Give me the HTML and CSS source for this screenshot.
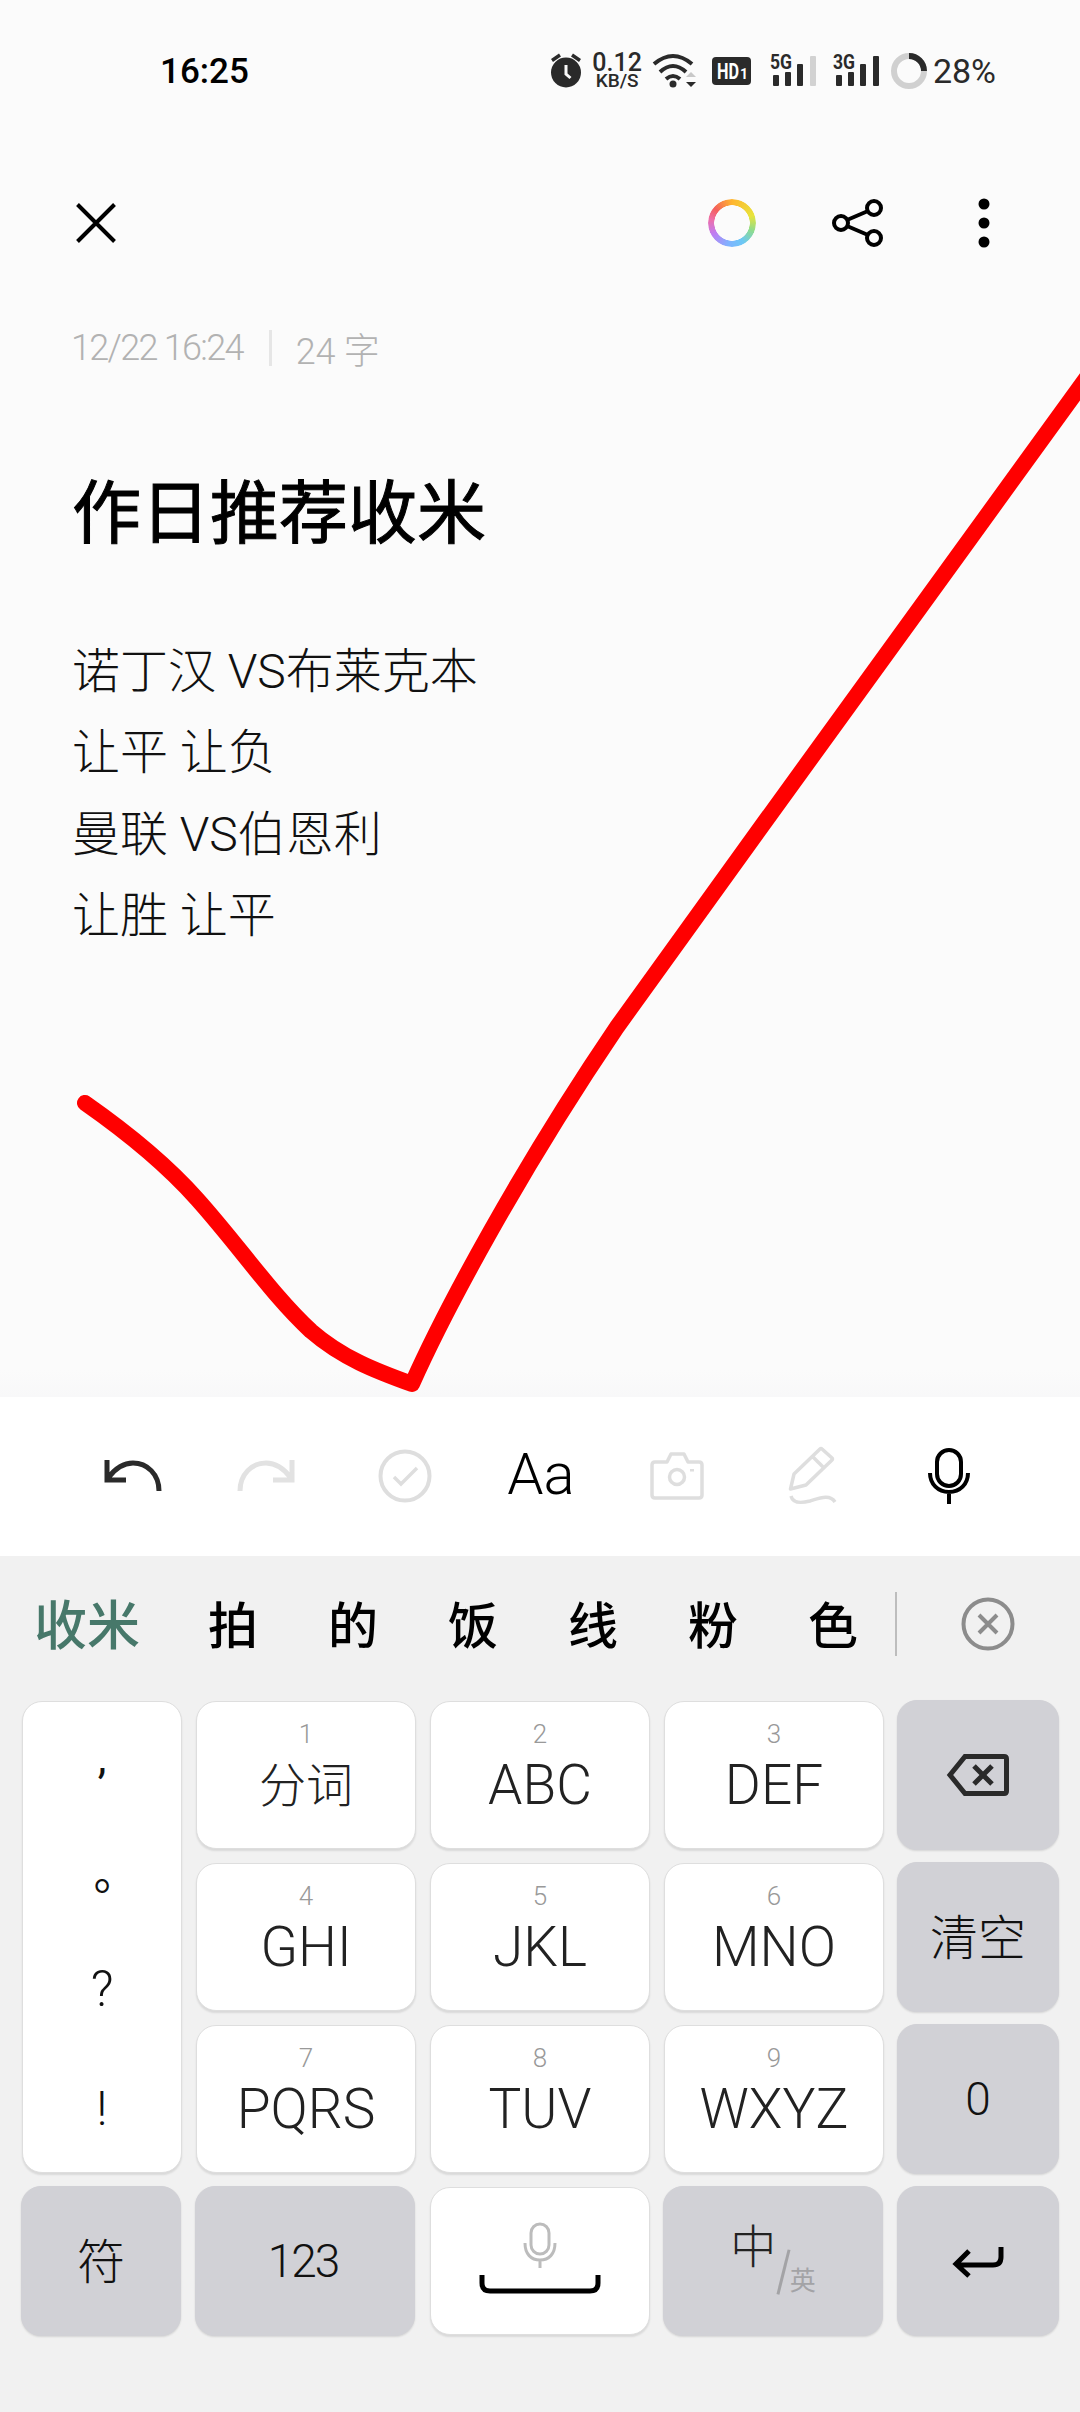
FILE: index.html
```html
<!DOCTYPE html>
<html lang="zh">
<head>
    <meta charset="UTF-8">
    <meta name="viewport" content="width=device-width, initial-scale=1.0">
    <title>便签</title>
    <link rel="stylesheet" href="styles.css">
</head>
<body>
<div class="page">
    <div class="note">
        <div class="status">
            <span class="time">16:25</span>
            <div class="status-icons">
                <svg class="ic-alarm" width="32" height="34" viewBox="0 0 32 34"><circle cx="16" cy="18.500" r="15" fill="#2a2a2a"/><path d="M2 6.500 10 1M22 1l8 5.500" stroke="#2a2a2a" stroke-width="3.500" fill="none"/><path d="M16 11v9l4.500 4" stroke="#fbfbfb" stroke-width="3" fill="none"/></svg>
                <div class="speed"><span>0.12</span><span class="speed-unit">KB/S</span></div>
                <svg class="ic-wifi" width="45" height="34" viewBox="0 0 45 34"><g fill="none" stroke="#2a2a2a" stroke-width="4"><path d="M1 10Q20-6 39 10"/><path d="M7 18Q20 6 33 18"/><path d="M13 25Q20 19 27 25"/></g><circle cx="20" cy="30" r="3.500" fill="#2a2a2a"/><path d="M33 23l5-5 5 5z" fill="#c8c8c8"/><path d="M33 28l5 5 5-5z" fill="#2a2a2a"/></svg>
                <svg class="ic-hd" width="39" height="28" viewBox="0 0 39 28"><rect width="39" height="28" rx="4" fill="#2a2a2a"/><text x="5" y="22" class="hd-text" textLength="22" lengthAdjust="spacingAndGlyphs">HD</text><text x="28" y="22" class="hd-sub">1</text></svg>
                <svg class="ic-signal" width="48" height="34" viewBox="0 0 48 34"><text x="0" y="15" class="net-text" textLength="22" lengthAdjust="spacingAndGlyphs">5G</text><rect x="3" y="21" width="6" height="11" rx="1" fill="#2a2a2a"/><rect x="15" y="18" width="6" height="14" rx="1" fill="#2a2a2a"/><rect x="27" y="10" width="6" height="22" rx="1" fill="#2a2a2a"/><rect x="40" y="2" width="6" height="30" rx="1" fill="#d2d2d2"/></svg>
                <svg class="ic-signal2" width="48" height="34" viewBox="0 0 48 34"><text x="0" y="15" class="net-text" textLength="22" lengthAdjust="spacingAndGlyphs">3G</text><rect x="3" y="21" width="6" height="11" rx="1" fill="#2a2a2a"/><rect x="15" y="18" width="6" height="14" rx="1" fill="#2a2a2a"/><rect x="27" y="10" width="6" height="22" rx="1" fill="#2a2a2a"/><rect x="40" y="2" width="6" height="30" rx="1" fill="#2a2a2a"/></svg>
                <svg class="ic-battery" width="36" height="36" viewBox="0 0 36 36"><circle cx="18" cy="18" r="15" fill="none" stroke="#d0d0d0" stroke-width="6"/><path d="M18 3A15 15 0 0 1 33 18" fill="none" stroke="#2a2a2a" stroke-width="6"/></svg>
                <span class="battery-text">28%</span>
            </div>
        </div>

        <div class="header">
            <svg width="40" height="40" viewBox="0 0 40 40"><path d="M1.500 1.500l37 37M38.500 1.500l-37 37" stroke="#000" stroke-width="4" fill="none"/></svg>
            <div class="header-right">
                <div class="color-ring"></div>
                <svg class="share" width="52" height="48" viewBox="0 0 52 48"><g fill="none" stroke="#000" stroke-width="4"><circle cx="9" cy="24" r="7"/><circle cx="42" cy="9" r="7"/><circle cx="42" cy="39" r="7"/><path d="M15 21 36 12M15 27 36 36"/></g></svg>
                <svg class="more" width="12" height="50" viewBox="0 0 12 50"><circle cx="6" cy="6" r="5.500"/><circle cx="6" cy="25" r="5.500"/><circle cx="6" cy="44" r="5.500"/></svg>
            </div>
        </div>

        <div class="meta">
            <span class="meta-date">12/22 16:24</span>
            <span class="meta-sep"></span>
            <span class="meta-count">24 字</span>
        </div>

        <h1 class="title">作日推荐收米</h1>
        <div class="content">
            <div>诺丁汉 VS布莱克本</div>
            <div>让平 让负</div>
            <div>曼联 VS伯恩利</div>
            <div>让胜 让平</div>
        </div>
    </div>

    <div class="toolbar">
        <div class="tool"><svg width="58" height="32" viewBox="0 0 58 32"><path d="M55 31C55 14 43 3 29 3 18 3 10 10 4 18M3 0V20H22" fill="none" stroke="#2a2a2a" stroke-width="5"/></svg></div>
        <div class="tool tool-redo"><svg width="58" height="32" viewBox="0 0 58 32"><path d="M3 31C3 14 15 3 29 3 40 3 48 10 54 18M55 0V20H36" fill="none" stroke="#e2e2e2" stroke-width="5"/></svg></div>
        <div class="tool"><svg width="54" height="54" viewBox="0 0 54 54"><circle cx="27" cy="27" r="24.500" fill="none" stroke="#dedede" stroke-width="4"/><path d="M16 28l7 7 16-16" fill="none" stroke="#dedede" stroke-width="3.500"/></svg></div>
        <div class="tool tool-text">Aa</div>
        <div class="tool"><svg width="54" height="48" viewBox="0 0 54 48"><path d="M5 10H17L21 2H34L38 10H49Q52 10 52 13V43Q52 46 49 46H5Q2 46 2 43V13Q2 10 5 10Z" fill="none" stroke="#dedede" stroke-width="3.500" stroke-linejoin="round"/><circle cx="27" cy="25" r="7.500" fill="none" stroke="#dedede" stroke-width="3.500"/><rect x="40" y="17" width="4" height="2.500" fill="#dedede"/></svg></div>
        <div class="tool"><svg width="48" height="60" viewBox="0 0 48 60"><path d="M1.500 43 5 28 31 3Q32 2 33 3L43 12Q44 13 43 14L17 39ZM23 10 36 23" fill="none" stroke="#dedede" stroke-width="3.500" stroke-linejoin="round"/><path d="M2 50C4 58 13 57 21 55 31 52 41 48 46 56" fill="none" stroke="#dedede" stroke-width="3.500"/></svg></div>
        <div class="tool"><svg width="42" height="56" viewBox="0 0 42 56"><rect x="9" y="2" width="24" height="36" rx="12" fill="none" stroke="#000" stroke-width="4"/><path d="M2 25C2 36 10 44 21 44 32 44 40 36 40 25M21 44V56" fill="none" stroke="#000" stroke-width="4"/></svg></div>
    </div>

    <div class="keyboard">
        <div class="candidates">
            <span class="cand cand-first">收米</span>
            <span class="cand">拍</span>
            <span class="cand">的</span>
            <span class="cand">饭</span>
            <span class="cand">线</span>
            <span class="cand">粉</span>
            <span class="cand">色</span>
            <span class="cand-sep"></span>
            <svg class="cand-clear" width="54" height="54" viewBox="0 0 54 54"><circle cx="27" cy="27" r="24.500" fill="none" stroke="#8c8c8c" stroke-width="4"/><path d="M18 18l18 18M36 18 18 36" stroke="#8c8c8c" stroke-width="4" fill="none"/></svg>
        </div>

        <div class="keys">
            <div class="key punct">
                <span class="p-comma">,</span>
                <span class="p-stop">。</span>
                <span class="p-q">?</span>
                <span class="p-ex">!</span>
            </div>
            <div class="key"><span class="num">1</span><span class="main main-cjk">分词</span></div>
            <div class="key"><span class="num">2</span><span class="main">ABC</span></div>
            <div class="key"><span class="num">3</span><span class="main">DEF</span></div>
            <div class="key gray"><svg width="62" height="42" viewBox="0 0 62 42"><path d="M18 2.500H57Q59.500 2.500 59.500 5V37Q59.500 39.500 57 39.500H18L3 21Z" fill="none" stroke="#2a2a2a" stroke-width="5"/><path d="M27 12 45 30M45 12 27 30" stroke="#2a2a2a" stroke-width="5" fill="none"/></svg></div>

            <div class="key"><span class="num">4</span><span class="main">GHI</span></div>
            <div class="key"><span class="num">5</span><span class="main">JKL</span></div>
            <div class="key"><span class="num">6</span><span class="main">MNO</span></div>
            <div class="key gray label label-cjk">清空</div>

            <div class="key"><span class="num">7</span><span class="main">PQRS</span></div>
            <div class="key"><span class="num">8</span><span class="main">TUV</span></div>
            <div class="key"><span class="num">9</span><span class="main">WXYZ</span></div>
            <div class="key gray label">0</div>

            <div class="key gray label label-cjk">符</div>
            <div class="key gray label label-num">123</div>
            <div class="key space"><svg width="122" height="72" viewBox="0 0 122 72"><rect x="52" y="2" width="18" height="30" rx="9" fill="none" stroke="#bcbcbc" stroke-width="3"/><path d="M46 21C46 32 52 38 61 38 70 38 76 32 76 21M61 38V46" fill="none" stroke="#bcbcbc" stroke-width="3"/><path d="M3 53V61Q3 69 11 69H111Q119 69 119 61V53" fill="none" stroke="#000" stroke-width="5"/></svg></div>
            <div class="key gray lang"><span class="lang-zh">中</span><span class="lang-slash"></span><span class="lang-en">英</span></div>
            <div class="key gray"><svg width="54" height="32" viewBox="0 0 54 32"><path d="M50 2V12Q50 20 42 20H6M18 6 5 19 18 31" fill="none" stroke="#000" stroke-width="5"/></svg></div>
        </div>
    </div>

    <svg class="ink" width="1080" height="2412" viewBox="0 0 1080 2412">
        <path d="M85 1103C125 1131 165 1163 197 1199 240 1247 272 1295 311 1331 342 1358 376 1371 412 1384 445 1310 520 1170 617 1027L764 823 964 547 1090 373" fill="none" stroke="#ff0000" stroke-width="16" stroke-linecap="round" stroke-linejoin="round"/>
    </svg>
</div>
</body>
</html>
```

FILE: styles.css
```css
* {
    box-sizing: border-box;
}

body {
    margin: 0;
    font-family: Roboto, "Noto Sans CJK SC", sans-serif;
    color: #000;
}

svg {
    overflow: visible;
}

.page {
    position: relative;
    width: 1080px;
    height: 2412px;
    overflow: hidden;
    display: flex;
    flex-direction: column;
    background: #fff;
}

.ink {
    position: absolute;
    left: 0;
    top: 0;
    pointer-events: none;
}

/* note area */
.note {
    height: 1397px;
    background: linear-gradient(#fbfbfb 1370px, #f8f8f9);
}

.status {
    height: 141px;
    display: flex;
    align-items: center;
    justify-content: space-between;
    padding: 0 84px 0 160px;
}

.time {
    margin-top: 2px;
    font-size: 35px;
    font-weight: 500;
}

.status-icons {
    display: flex;
    align-items: center;
    color: #2a2a2a;
}

.speed {
    display: flex;
    flex-direction: column;
    align-items: center;
    margin-left: 10px;
    font-size: 25px;
    font-weight: 500;
    line-height: 20px;
}

.speed-unit {
    font-size: 19px;
    line-height: 16px;
}

.ic-wifi {
    margin-left: 11px;
}

.ic-hd {
    margin-left: 14px;
}

.hd-text {
    font-size: 22px;
    font-weight: 700;
    fill: #fff;
}

.hd-sub {
    font-size: 14px;
    font-weight: 700;
    fill: #fff;
}

.net-text {
    font-size: 20px;
    font-weight: 700;
    fill: #2a2a2a;
}

.ic-signal {
    margin-left: 19px;
}

.ic-signal2 {
    margin-left: 15px;
}

.ic-battery {
    margin-left: 10px;
}

.battery-text {
    margin-left: 6px;
    font-size: 34px;
}

.header {
    height: 164px;
    display: flex;
    align-items: center;
    justify-content: space-between;
    padding: 0 90px 0 76px;
}

.header-right {
    display: flex;
    align-items: center;
}

.color-ring {
    width: 48px;
    height: 48px;
    border-radius: 50%;
    background: conic-gradient(#ffb52e, #e8e43c 70deg, #8fdc8c 110deg, #6cc8f5 150deg, #7fb2ff 190deg, #c07cf2 240deg, #ee6ea8 280deg, #f4605c 310deg, #ffb52e);
    -webkit-mask: radial-gradient(circle, transparent 17.500px, #000 18px);
    mask: radial-gradient(circle, transparent 17.500px, #000 18px);
}

.share {
    margin-left: 76px;
}

.more {
    margin-left: 94.500px;
}

.meta {
    height: 86px;
    display: flex;
    align-items: center;
    padding-left: 71px;
    color: #b2b2b2;
    font-size: 36px;
    font-weight: 300;
}

.meta-date {
    letter-spacing: -1.700px;
}

.meta-sep {
    width: 3px;
    height: 36px;
    margin: 0 24px 0 26px;
    background: #e6e6e6;
}

.meta-count {
    letter-spacing: -0.200px;
}

.title {
    margin: 74px 0 0;
    padding-left: 72px;
    font-size: 69px;
    line-height: 100px;
    font-weight: 400;
    -webkit-text-stroke: 1px #000;
}

.content {
    margin-top: 66px;
    padding-left: 72px;
    font-size: 48px;
    line-height: 81.300px;
    font-weight: 300;
    color: #111;
}

/* toolbar */
.toolbar {
    height: 159px;
    display: flex;
    align-items: center;
    padding: 0 0 2px 65px;
    background: #fff;
}

.tool {
    width: 136px;
    display: flex;
    justify-content: center;
    align-items: center;
}

.tool-redo {
    margin-left: -3px;
    margin-right: 3px;
}

.tool-text {
    padding-bottom: 3px;
    font-size: 58px;
    font-weight: 300;
}

/* keyboard */
.keyboard {
    flex: 1;
    background: #f1f1f1;
}

.candidates {
    height: 136px;
    display: flex;
    align-items: center;
    padding-left: 34px;
    font-size: 50px;
    font-weight: 500;
}

.cand {
    width: 120px;
    margin-top: -5px;
    text-align: center;
}

.cand-first {
    width: 106px;
    margin-right: 33px;
    font-size: 53px;
    color: #47786a;
}

.cand-sep {
    width: 2px;
    height: 64px;
    margin-left: 2px;
    background: #bdbdbd;
}

.cand-clear {
    margin-left: 64px;
}

.keys {
    display: grid;
    grid-template-columns: 160px 220px 220px 220px 162px;
    grid-auto-rows: 148px;
    gap: 14px;
    margin-top: 9px;
    padding-left: 22px;
}

.key {
    display: flex;
    flex-direction: column;
    align-items: center;
    padding-top: 17px;
    background: #fff;
    border: 1px solid #dedede;
    border-radius: 20px;
    box-shadow: 0 2px 2px rgba(0, 0, 0, 0.1);
    color: #222;
}

.num {
    font-size: 26px;
    font-weight: 300;
    line-height: 30px;
    color: #999;
}

.main {
    margin-top: 6px;
    font-size: 55px;
    font-weight: 300;
    line-height: 60px;
}

.main-cjk {
    margin-top: 7px;
    font-size: 47px;
}

.gray {
    justify-content: center;
    margin: -1px 1px -1px -1px;
    padding-top: 0;
    background: #d1d1d6;
    border-color: #d1d1d6;
    box-shadow: 0 1px 2px rgba(0, 0, 0, 0.12);
    color: #111;
}

.label {
    font-size: 46px;
    font-weight: 300;
}

.label-cjk {
    padding-bottom: 7px;
    font-size: 48px;
}

.label-num {
    padding-right: 4px;
    letter-spacing: -2px;
}

.punct {
    grid-row: span 3;
    padding-top: 26px;
    font-size: 44px;
    color: #111;
}

.punct span {
    height: 60px;
    line-height: 60px;
}

.p-stop {
    margin-top: 66px;
    font-family: "Noto Sans CJK TC", sans-serif;
}

.p-q {
    margin-top: 45px;
    font-size: 50px;
    font-weight: 300;
}

.p-ex {
    margin-top: 60px;
    font-size: 48px;
    font-weight: 300;
}

.space {
    padding-top: 34px;
}

.lang {
    flex-direction: row;
    justify-content: center;
    align-items: flex-start;
    padding: 30px 0 0 0;
}

.lang-zh {
    font-size: 46px;
    line-height: 60px;
    font-weight: 300;
    color: #222;
}

.lang-slash {
    width: 2.500px;
    height: 46px;
    margin: 32px 5px 0 6px;
    background: #a3a3a6;
    transform: rotate(14deg);
}

.lang-en {
    margin-top: 46px;
    font-size: 26px;
    line-height: 36px;
    color: #a3a3a6;
}
```
